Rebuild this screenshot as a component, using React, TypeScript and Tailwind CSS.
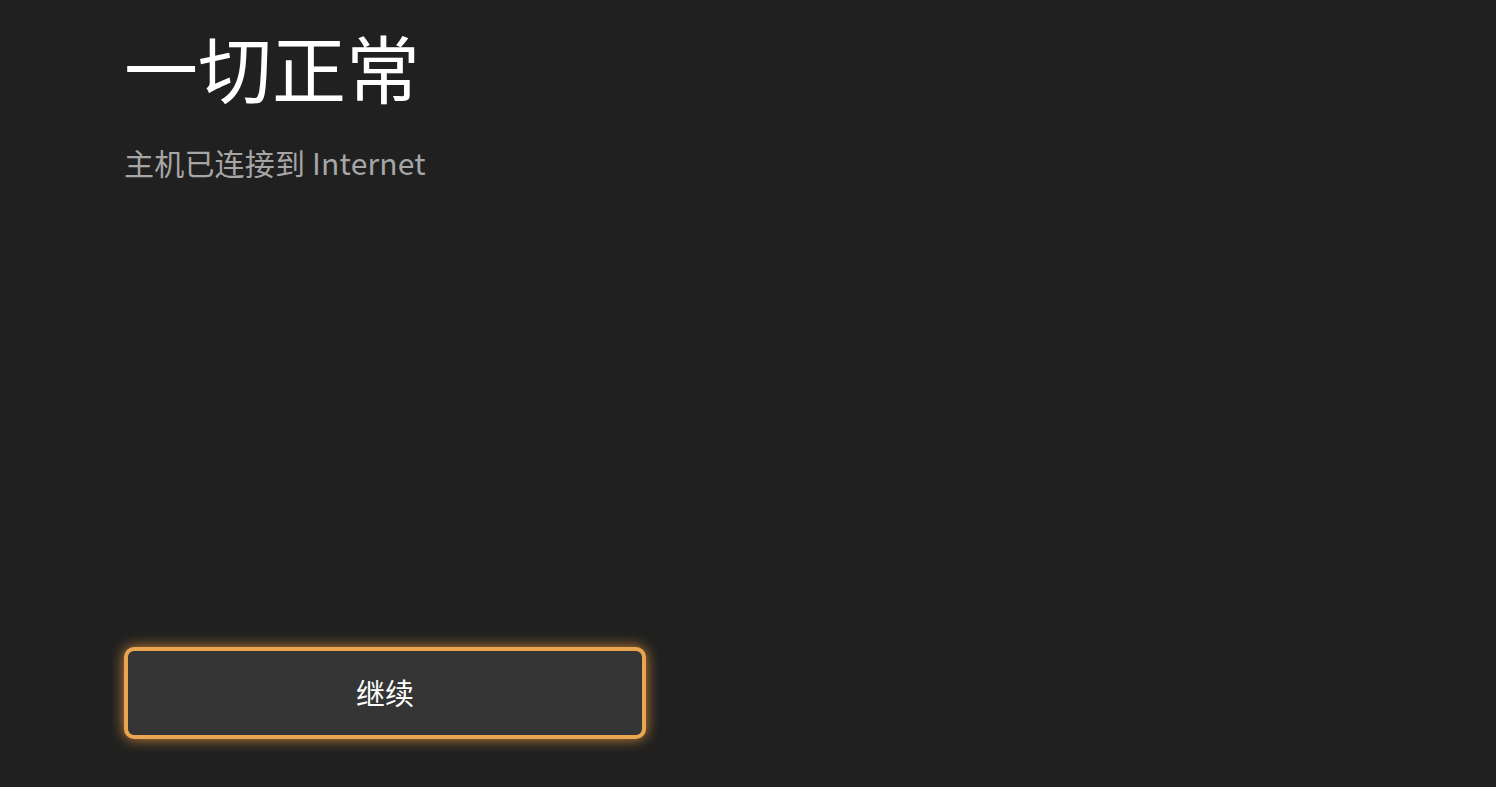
export default function App() {
  return (
    <div
      className="w-[1496px] h-[787px] bg-[#202020] flex flex-col pl-[124px] pt-[29px] pb-[48px] overflow-hidden"
      style={{ fontFamily: '"Noto Sans CJK SC", "Noto Sans", sans-serif' }}
    >
      <h1 className="text-[74px] leading-none text-white font-normal">一切正常</h1>
      <p className="mt-[44px] text-[30px] leading-none text-[#a6a6a6] tracking-[0.2px]">主机已连接到 Internet</p>
      <div className="flex-1" />
      <button className="w-[522px] h-[92px] rounded-[10px] border-[4px] border-[#e9a550] bg-[#353535] text-white text-[29px] shadow-[0_0_14px_rgba(233,150,60,0.85)] flex items-center justify-center">
        继续
      </button>
    </div>
  );
}
